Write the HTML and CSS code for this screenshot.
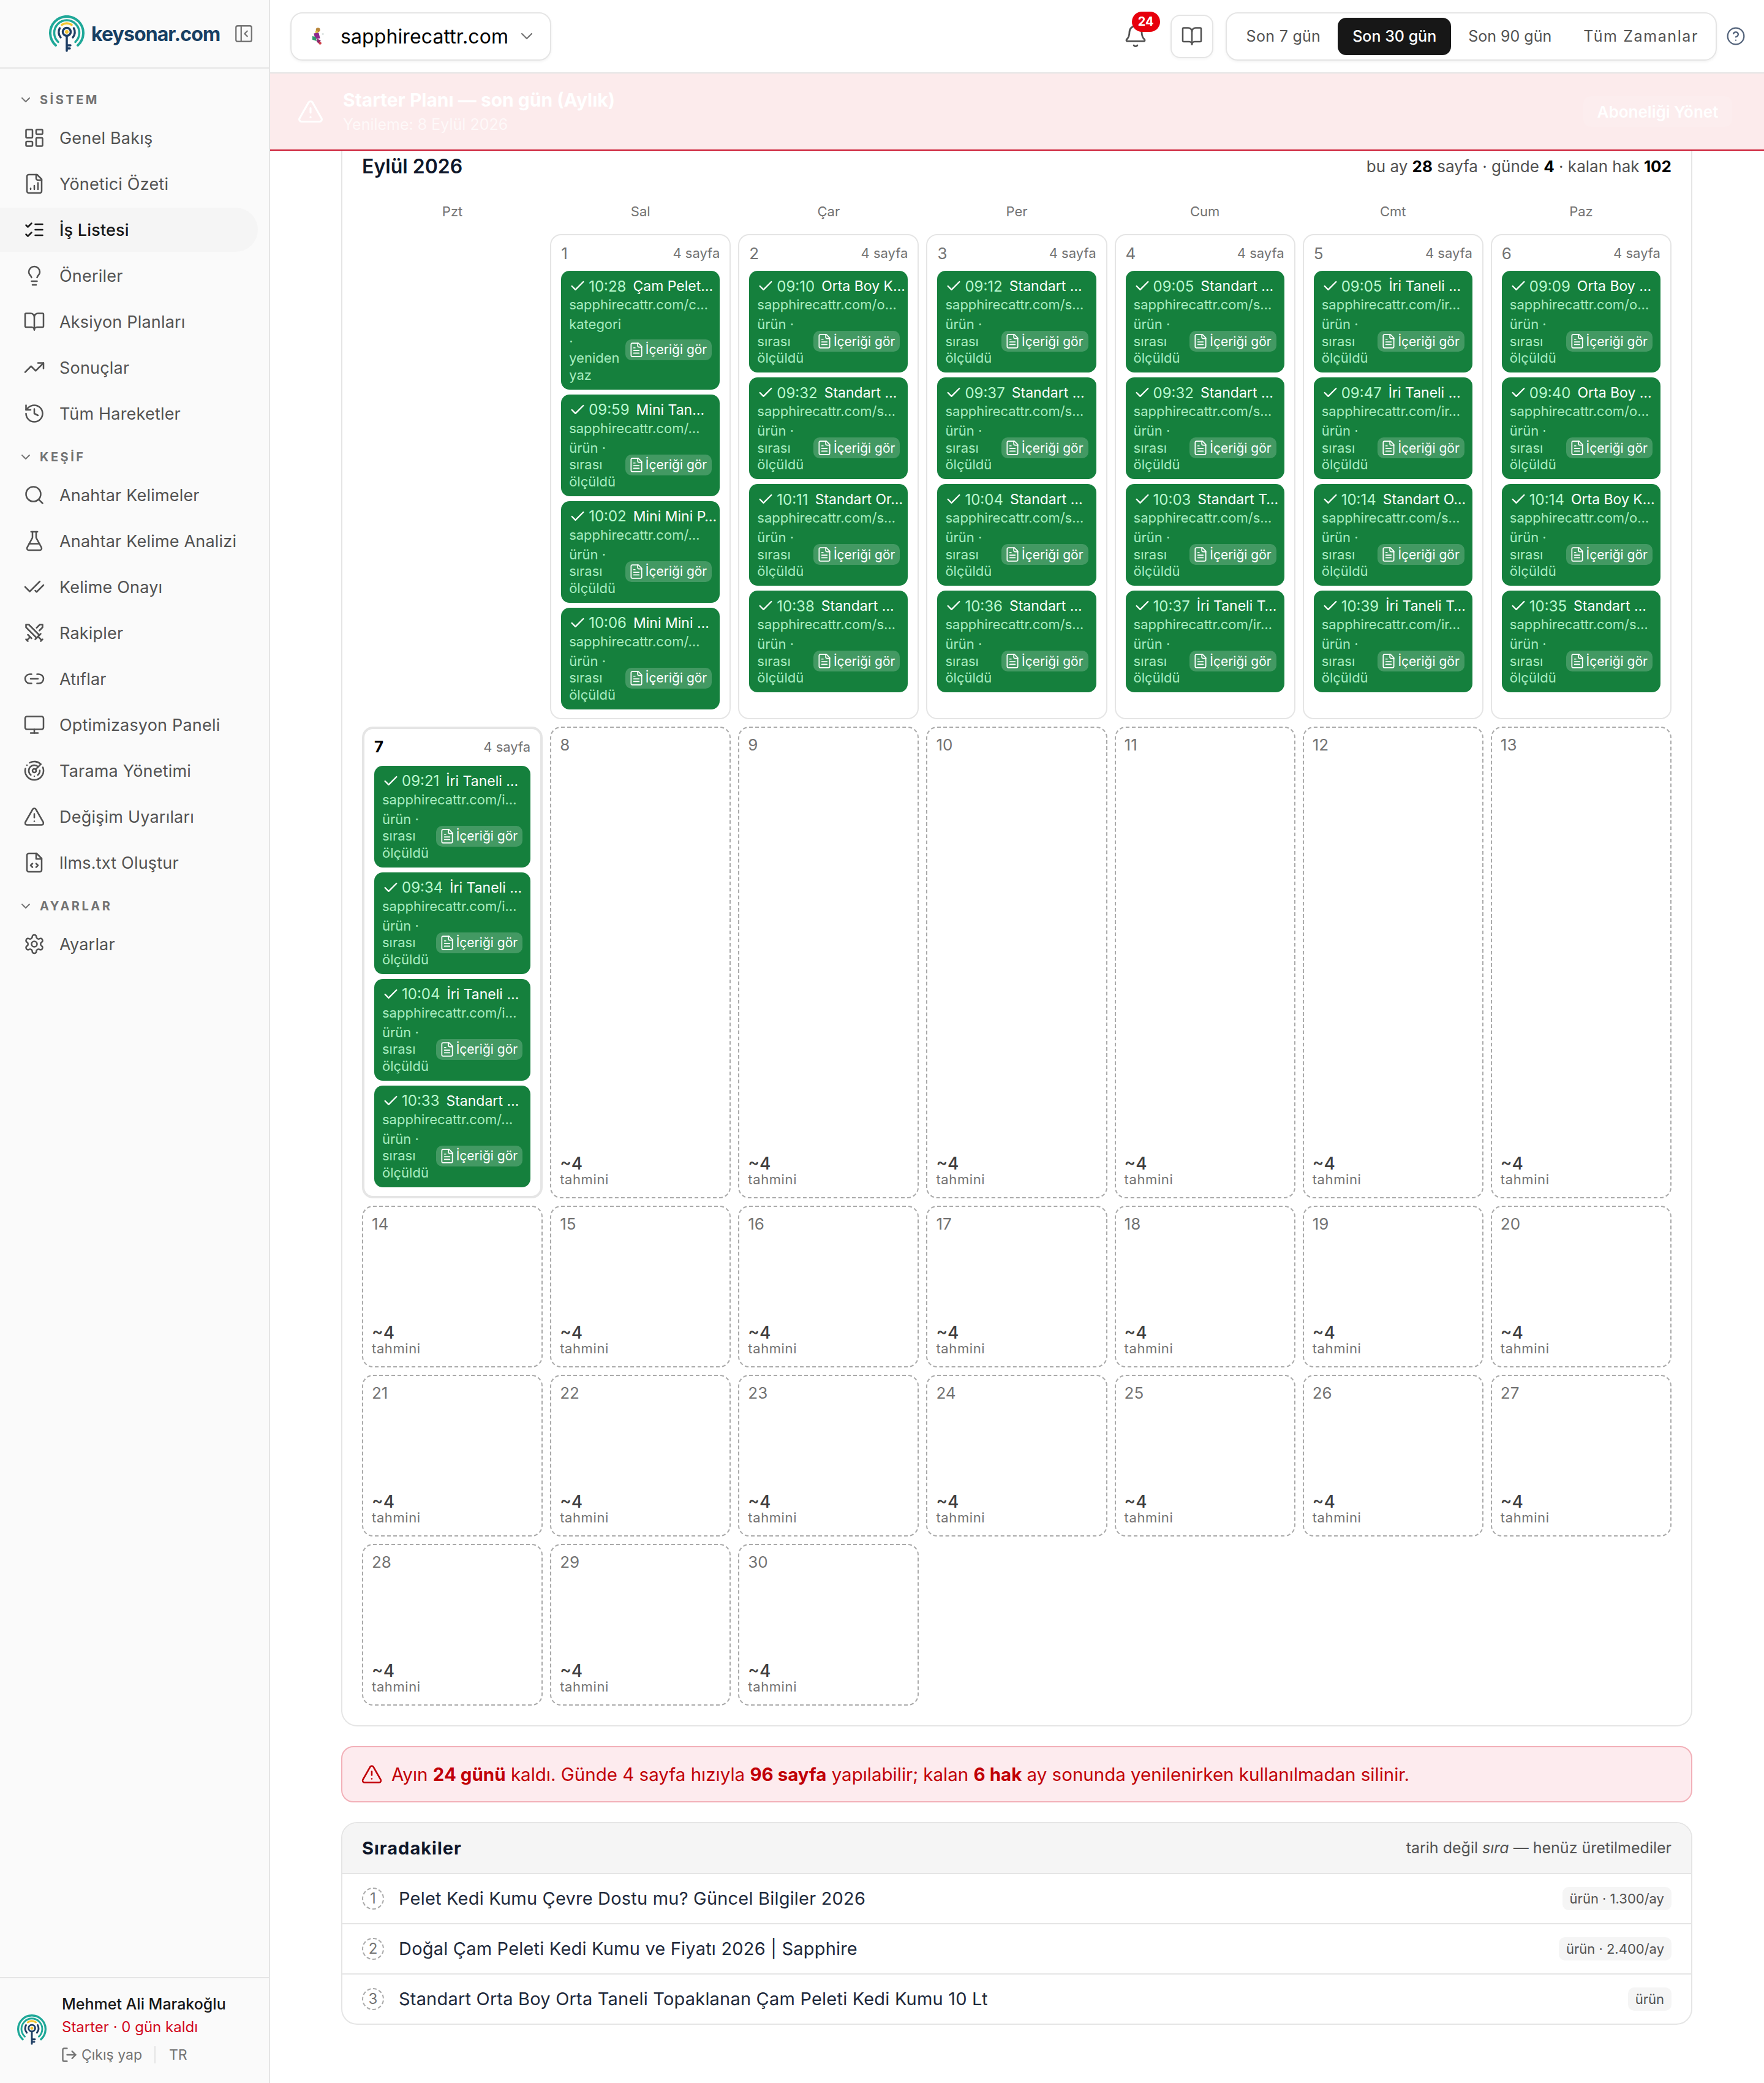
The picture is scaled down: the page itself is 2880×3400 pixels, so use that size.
FILE: index.html
```html
<!DOCTYPE html>
<html lang="tr">
<head>
    <meta charset="UTF-8">
    <title>keysonar.com - İş Listesi</title>
    <link rel="stylesheet" href="styles.css">
</head>
<body>

<!-- Icon sprite -->
<svg class="sprite" xmlns="http://www.w3.org/2000/svg">
    <symbol id="i-dash" viewBox="0 0 24 24"><rect x="3" y="3" width="7" height="9" rx="1"/><rect x="14" y="3" width="7" height="5" rx="1"/><rect x="14" y="12" width="7" height="9" rx="1"/><rect x="3" y="16" width="7" height="5" rx="1"/></symbol>
    <symbol id="i-report" viewBox="0 0 24 24"><path d="M15 2H6a2 2 0 0 0-2 2v16a2 2 0 0 0 2 2h12a2 2 0 0 0 2-2V7z"/><path d="M14 2v4a2 2 0 0 0 2 2h4"/><path d="M8 18v-1"/><path d="M12 18v-4"/><path d="M16 18v-7"/></symbol>
    <symbol id="i-list" viewBox="0 0 24 24"><path d="M3 17l2 2 4-4"/><path d="M3 7l2 2 4-4"/><path d="M13 6h8"/><path d="M13 12h8"/><path d="M13 18h8"/></symbol>
    <symbol id="i-bulb" viewBox="0 0 24 24"><path d="M15 14c.2-1 .7-1.7 1.5-2.5 1-.9 1.5-2.2 1.5-3.5A6 6 0 0 0 6 8c0 1 .2 2.2 1.5 3.5.7.7 1.3 1.5 1.5 2.5"/><path d="M9 18h6"/><path d="M10 22h4"/></symbol>
    <symbol id="i-book" viewBox="0 0 24 24"><path d="M12 7v14"/><path d="M3 18a1 1 0 0 1-1-1V4a1 1 0 0 1 1-1h5a4 4 0 0 1 4 4 4 4 0 0 1 4-4h5a1 1 0 0 1 1 1v13a1 1 0 0 1-1 1h-6a3 3 0 0 0-3 3 3 3 0 0 0-3-3z"/></symbol>
    <symbol id="i-trend" viewBox="0 0 24 24"><path d="M22 7l-8.500 8.500-5-5L2 17"/><path d="M16 7h6v6"/></symbol>
    <symbol id="i-history" viewBox="0 0 24 24"><path d="M3 12a9 9 0 1 0 9-9 9.750 9.750 0 0 0-6.740 2.740L3 8"/><path d="M3 3v5h5"/><path d="M12 7v5l4 2"/></symbol>
    <symbol id="i-search" viewBox="0 0 24 24"><circle cx="11" cy="11" r="8"/><path d="M21 21l-4.300-4.300"/></symbol>
    <symbol id="i-flask" viewBox="0 0 24 24"><path d="M14 2v6a2 2 0 0 0 .245.960l5.510 10.080A2 2 0 0 1 18 22H6a2 2 0 0 1-1.755-2.960l5.510-10.080A2 2 0 0 0 10 8V2"/><path d="M6.453 15h11.094"/><path d="M8.500 2h7"/></symbol>
    <symbol id="i-checks" viewBox="0 0 24 24"><path d="M18 6L7 17l-5-5"/><path d="M22 10l-7.500 7.500L13 16"/></symbol>
    <symbol id="i-swords" viewBox="0 0 24 24"><path d="M14.500 17.500L3 6V3h3l11.500 11.500"/><path d="M13 19l6-6"/><path d="M16 16l4 4"/><path d="M19 21l2-2"/><path d="M14.500 6.500L18 3h3v3l-3.500 3.500"/><path d="M5 14l4 4"/><path d="M7 17l-3 3"/><path d="M3 19l2 2"/></symbol>
    <symbol id="i-link" viewBox="0 0 24 24"><path d="M9 17H7A5 5 0 0 1 7 7h2"/><path d="M15 7h2a5 5 0 1 1 0 10h-2"/><path d="M8 12h8"/></symbol>
    <symbol id="i-monitor" viewBox="0 0 24 24"><rect x="2" y="3" width="20" height="14" rx="2"/><path d="M8 21h8"/><path d="M12 17v4"/></symbol>
    <symbol id="i-radar" viewBox="0 0 24 24"><path d="M19.070 4.930A10 10 0 0 0 6.990 3.340"/><path d="M4 6h.01"/><path d="M2.290 9.620A10 10 0 1 0 21.310 8.350"/><path d="M16.240 7.760A6 6 0 1 0 8.230 16.670"/><path d="M12 18h.01"/><path d="M17.990 11.660A6 6 0 0 1 15.770 16.670"/><circle cx="12" cy="12" r="2"/><path d="M13.410 10.590l5.660-5.660"/></symbol>
    <symbol id="i-alert" viewBox="0 0 24 24"><path d="M21.730 18l-8-14a2 2 0 0 0-3.480 0l-8 14A2 2 0 0 0 4 21h16a2 2 0 0 0 1.730-3"/><path d="M12 9v4"/><path d="M12 17h.01"/></symbol>
    <symbol id="i-filecode" viewBox="0 0 24 24"><path d="M14.500 2H6a2 2 0 0 0-2 2v16a2 2 0 0 0 2 2h12a2 2 0 0 0 2-2V7.500L14.500 2z"/><path d="M14 2v6h6"/><path d="M10 13l-2 2 2 2"/><path d="M14 17l2-2-2-2"/></symbol>
    <symbol id="i-gear" viewBox="0 0 24 24"><path d="M12.220 2h-.44a2 2 0 0 0-2 2v.18a2 2 0 0 1-1 1.730l-.43.25a2 2 0 0 1-2 0l-.15-.08a2 2 0 0 0-2.730.73l-.22.38a2 2 0 0 0 .73 2.730l.15.1a2 2 0 0 1 1 1.720v.51a2 2 0 0 1-1 1.740l-.15.09a2 2 0 0 0-.73 2.730l.22.38a2 2 0 0 0 2.730.73l.15-.08a2 2 0 0 1 2 0l.43.25a2 2 0 0 1 1 1.730V20a2 2 0 0 0 2 2h.44a2 2 0 0 0 2-2v-.18a2 2 0 0 1 1-1.730l.43-.25a2 2 0 0 1 2 0l.15.08a2 2 0 0 0 2.730-.73l.22-.39a2 2 0 0 0-.73-2.730l-.15-.08a2 2 0 0 1-1-1.740v-.5a2 2 0 0 1 1-1.740l.15-.09a2 2 0 0 0 .73-2.730l-.22-.38a2 2 0 0 0-2.730-.73l-.15.08a2 2 0 0 1-2 0l-.43-.25a2 2 0 0 1-1-1.730V4a2 2 0 0 0-2-2z"/><circle cx="12" cy="12" r="3"/></symbol>
    <symbol id="i-chev" viewBox="0 0 24 24"><path d="M6 9l6 6 6-6"/></symbol>
    <symbol id="i-panel" viewBox="0 0 24 24"><rect x="3" y="3" width="18" height="18" rx="2"/><path d="M9 3v18"/><path d="M16 15l-3-3 3-3"/></symbol>
    <symbol id="i-bell" viewBox="0 0 24 24"><path d="M10.268 21a2 2 0 0 0 3.464 0"/><path d="M3.262 15.326A1 1 0 0 0 4 17h16a1 1 0 0 0 .74-1.673C19.410 13.956 18 12.499 18 8A6 6 0 0 0 6 8c0 4.499-1.411 5.956-2.738 7.326"/></symbol>
    <symbol id="i-help" viewBox="0 0 24 24"><circle cx="12" cy="12" r="10"/><path d="M9.090 9a3 3 0 0 1 5.830 1c0 2-3 3-3 3"/><path d="M12 17h.01"/></symbol>
    <symbol id="i-check" viewBox="0 0 24 24"><path d="M20 6L9 17l-5-5"/></symbol>
    <symbol id="i-file" viewBox="0 0 24 24"><path d="M15 2H6a2 2 0 0 0-2 2v16a2 2 0 0 0 2 2h12a2 2 0 0 0 2-2V7z"/><path d="M14 2v4a2 2 0 0 0 2 2h4"/><path d="M10 9H8"/><path d="M16 13H8"/><path d="M16 17H8"/></symbol>
    <symbol id="i-logout" viewBox="0 0 24 24"><path d="M9 21H5a2 2 0 0 1-2-2V5a2 2 0 0 1 2-2h4"/><path d="M16 17l5-5-5-5"/><path d="M21 12H9"/></symbol>
    <symbol id="i-logo" viewBox="0 0 58 60">
        <g fill="none" stroke-linecap="round">
            <path d="M11 49A27 27 0 1 1 47 49" stroke="#1fa898" stroke-width="4"/>
            <path d="M15 43.500A20.500 20.500 0 1 1 43 43.500" stroke="#1fa898" stroke-width="3.500"/>
            <path d="M19 36A13.500 13.500 0 0 1 17.500 21" stroke="#1d3d63" stroke-width="3.500"/>
            <path d="M39 36A13.500 13.500 0 0 0 40.500 21" stroke="#1d3d63" stroke-width="3.500"/>
            <path d="M21 15.500A14.500 14.500 0 0 1 37 15.500" stroke="#f4c430" stroke-width="3.500"/>
            <circle cx="29" cy="27" r="6.500" stroke="#1d3d63" stroke-width="3.500"/>
            <path d="M29 34v24M29 49h6M29 54h5" stroke="#1d3d63" stroke-width="3.500"/>
        </g>
        <circle cx="29" cy="27" r="3" fill="#f4c430"/>
    </symbol>
</svg>

<div class="app">

    <!-- Sidebar -->
    <aside class="sidebar">
        <div class="brand">
            <svg class="brand-logo"><use href="#i-logo"/></svg>
            <span class="brand-name">keysonar.com</span>
            <svg class="ic brand-toggle"><use href="#i-panel"/></svg>
        </div>

        <nav class="nav">
            <div class="nav-label"><svg class="ic"><use href="#i-chev"/></svg><span>SİSTEM</span></div>
            <a class="nav-item"><svg class="ic"><use href="#i-dash"/></svg>Genel Bakış</a>
            <a class="nav-item"><svg class="ic"><use href="#i-report"/></svg>Yönetici Özeti</a>
            <a class="nav-item active"><svg class="ic"><use href="#i-list"/></svg>İş Listesi</a>
            <a class="nav-item"><svg class="ic"><use href="#i-bulb"/></svg>Öneriler</a>
            <a class="nav-item"><svg class="ic"><use href="#i-book"/></svg>Aksiyon Planları</a>
            <a class="nav-item"><svg class="ic"><use href="#i-trend"/></svg>Sonuçlar</a>
            <a class="nav-item"><svg class="ic"><use href="#i-history"/></svg>Tüm Hareketler</a>

            <div class="nav-label"><svg class="ic"><use href="#i-chev"/></svg><span>KEŞİF</span></div>
            <a class="nav-item"><svg class="ic"><use href="#i-search"/></svg>Anahtar Kelimeler</a>
            <a class="nav-item"><svg class="ic"><use href="#i-flask"/></svg>Anahtar Kelime Analizi</a>
            <a class="nav-item"><svg class="ic"><use href="#i-checks"/></svg>Kelime Onayı</a>
            <a class="nav-item"><svg class="ic"><use href="#i-swords"/></svg>Rakipler</a>
            <a class="nav-item"><svg class="ic"><use href="#i-link"/></svg>Atıflar</a>
            <a class="nav-item"><svg class="ic"><use href="#i-monitor"/></svg>Optimizasyon Paneli</a>
            <a class="nav-item"><svg class="ic"><use href="#i-radar"/></svg>Tarama Yönetimi</a>
            <a class="nav-item"><svg class="ic"><use href="#i-alert"/></svg>Değişim Uyarıları</a>
            <a class="nav-item"><svg class="ic"><use href="#i-filecode"/></svg>llms.txt Oluştur</a>

            <div class="nav-label"><svg class="ic"><use href="#i-chev"/></svg><span>AYARLAR</span></div>
            <a class="nav-item"><svg class="ic"><use href="#i-gear"/></svg>Ayarlar</a>
        </nav>

        <div class="user">
            <svg class="user-logo"><use href="#i-logo"/></svg>
            <div class="user-info">
                <div class="user-name">Mehmet Ali Marakoğlu</div>
                <div class="user-plan">Starter · 0 gün kaldı</div>
                <div class="user-actions">
                    <svg class="ic"><use href="#i-logout"/></svg>
                    <span>Çıkış yap</span>
                    <span class="user-sep"></span>
                    <span>TR</span>
                </div>
            </div>
        </div>
    </aside>

    <div class="main">

        <!-- Top bar -->
        <header class="topbar">
            <button class="site-select">
                <svg class="favicon" viewBox="0 0 28 28">
                    <circle cx="15" cy="5" r="3" fill="#b8863b"/>
                    <circle cx="13" cy="8" r="2" fill="#d9c24a"/>
                    <path d="M9 10l7-1 2 8-7 1z" fill="#8e2a8e"/>
                    <path d="M7 14l5 1 1 6-6-2z" fill="#2f9a6d"/>
                    <path d="M14 18l5 2-2 5-4-3z" fill="#8e2a6d"/>
                    <circle cx="18" cy="24" r="2" fill="#d0434b"/>
                    <circle cx="22" cy="11" r="1.500" fill="#dfe5e3"/>
                </svg>
                <span>sapphirecattr.com</span>
                <svg class="ic"><use href="#i-chev"/></svg>
            </button>

            <div class="topbar-right">
                <div class="bell">
                    <svg class="ic"><use href="#i-bell"/></svg>
                    <span class="bell-badge">24</span>
                </div>
                <button class="book-btn"><svg class="ic"><use href="#i-book"/></svg></button>
                <div class="range">
                    <button>Son 7 gün</button>
                    <button class="on">Son 30 gün</button>
                    <button>Son 90 gün</button>
                    <button>Tüm Zamanlar</button>
                </div>
                <svg class="ic help"><use href="#i-help"/></svg>
            </div>
        </header>

        <!-- Plan banner -->
        <div class="banner">
            <svg class="ic"><use href="#i-alert"/></svg>
            <div class="banner-text">
                <div class="banner-title">Starter Planı — son gün (Aylık)</div>
                <div class="banner-sub">Yenileme: 8 Eylül 2026</div>
            </div>
            <button class="banner-btn">Aboneliği Yönet</button>
        </div>

        <div class="content">

            <!-- Month calendar -->
            <section class="calendar">
                <div class="cal-head">
                    <h2>Eylül 2026</h2>
                    <p>bu ay <b>28</b> sayfa · günde <b>4</b> · kalan hak <b>102</b></p>
                </div>

                <div class="weekdays">
                    <span>Pzt</span><span>Sal</span><span>Çar</span><span>Per</span><span>Cum</span><span>Cmt</span><span>Paz</span>
                </div>

                <div class="cal-grid">
                    <div></div>

                    <div class="day">
                        <div class="day-head"><span>1</span><small>4 sayfa</small></div>
                        <div class="job"><div class="job-title"><svg class="ic"><use href="#i-check"/></svg><time>10:28</time><span>Çam Pelet…</span></div><div class="job-url">sapphirecattr.com/c…</div><div class="job-meta"><span>kategori · yeniden yaz</span><a class="job-btn"><svg class="ic"><use href="#i-file"/></svg>İçeriği gör</a></div></div>
                        <div class="job"><div class="job-title"><svg class="ic"><use href="#i-check"/></svg><time>09:59</time><span>Mini Tan…</span></div><div class="job-url">sapphirecattr.com/…</div><div class="job-meta"><span>ürün · sırası ölçüldü</span><a class="job-btn"><svg class="ic"><use href="#i-file"/></svg>İçeriği gör</a></div></div>
                        <div class="job"><div class="job-title"><svg class="ic"><use href="#i-check"/></svg><time>10:02</time><span>Mini Mini P…</span></div><div class="job-url">sapphirecattr.com/…</div><div class="job-meta"><span>ürün · sırası ölçüldü</span><a class="job-btn"><svg class="ic"><use href="#i-file"/></svg>İçeriği gör</a></div></div>
                        <div class="job"><div class="job-title"><svg class="ic"><use href="#i-check"/></svg><time>10:06</time><span>Mini Mini …</span></div><div class="job-url">sapphirecattr.com/…</div><div class="job-meta"><span>ürün · sırası ölçüldü</span><a class="job-btn"><svg class="ic"><use href="#i-file"/></svg>İçeriği gör</a></div></div>
                    </div>

                    <div class="day">
                        <div class="day-head"><span>2</span><small>4 sayfa</small></div>
                        <div class="job"><div class="job-title"><svg class="ic"><use href="#i-check"/></svg><time>09:10</time><span>Orta Boy K…</span></div><div class="job-url">sapphirecattr.com/o…</div><div class="job-meta"><span>ürün · sırası ölçüldü</span><a class="job-btn"><svg class="ic"><use href="#i-file"/></svg>İçeriği gör</a></div></div>
                        <div class="job"><div class="job-title"><svg class="ic"><use href="#i-check"/></svg><time>09:32</time><span>Standart …</span></div><div class="job-url">sapphirecattr.com/s…</div><div class="job-meta"><span>ürün · sırası ölçüldü</span><a class="job-btn"><svg class="ic"><use href="#i-file"/></svg>İçeriği gör</a></div></div>
                        <div class="job"><div class="job-title"><svg class="ic"><use href="#i-check"/></svg><time>10:11</time><span>Standart Or…</span></div><div class="job-url">sapphirecattr.com/s…</div><div class="job-meta"><span>ürün · sırası ölçüldü</span><a class="job-btn"><svg class="ic"><use href="#i-file"/></svg>İçeriği gör</a></div></div>
                        <div class="job"><div class="job-title"><svg class="ic"><use href="#i-check"/></svg><time>10:38</time><span>Standart …</span></div><div class="job-url">sapphirecattr.com/s…</div><div class="job-meta"><span>ürün · sırası ölçüldü</span><a class="job-btn"><svg class="ic"><use href="#i-file"/></svg>İçeriği gör</a></div></div>
                    </div>

                    <div class="day">
                        <div class="day-head"><span>3</span><small>4 sayfa</small></div>
                        <div class="job"><div class="job-title"><svg class="ic"><use href="#i-check"/></svg><time>09:12</time><span>Standart …</span></div><div class="job-url">sapphirecattr.com/s…</div><div class="job-meta"><span>ürün · sırası ölçüldü</span><a class="job-btn"><svg class="ic"><use href="#i-file"/></svg>İçeriği gör</a></div></div>
                        <div class="job"><div class="job-title"><svg class="ic"><use href="#i-check"/></svg><time>09:37</time><span>Standart …</span></div><div class="job-url">sapphirecattr.com/s…</div><div class="job-meta"><span>ürün · sırası ölçüldü</span><a class="job-btn"><svg class="ic"><use href="#i-file"/></svg>İçeriği gör</a></div></div>
                        <div class="job"><div class="job-title"><svg class="ic"><use href="#i-check"/></svg><time>10:04</time><span>Standart …</span></div><div class="job-url">sapphirecattr.com/s…</div><div class="job-meta"><span>ürün · sırası ölçüldü</span><a class="job-btn"><svg class="ic"><use href="#i-file"/></svg>İçeriği gör</a></div></div>
                        <div class="job"><div class="job-title"><svg class="ic"><use href="#i-check"/></svg><time>10:36</time><span>Standart …</span></div><div class="job-url">sapphirecattr.com/s…</div><div class="job-meta"><span>ürün · sırası ölçüldü</span><a class="job-btn"><svg class="ic"><use href="#i-file"/></svg>İçeriği gör</a></div></div>
                    </div>

                    <div class="day">
                        <div class="day-head"><span>4</span><small>4 sayfa</small></div>
                        <div class="job"><div class="job-title"><svg class="ic"><use href="#i-check"/></svg><time>09:05</time><span>Standart …</span></div><div class="job-url">sapphirecattr.com/s…</div><div class="job-meta"><span>ürün · sırası ölçüldü</span><a class="job-btn"><svg class="ic"><use href="#i-file"/></svg>İçeriği gör</a></div></div>
                        <div class="job"><div class="job-title"><svg class="ic"><use href="#i-check"/></svg><time>09:32</time><span>Standart …</span></div><div class="job-url">sapphirecattr.com/s…</div><div class="job-meta"><span>ürün · sırası ölçüldü</span><a class="job-btn"><svg class="ic"><use href="#i-file"/></svg>İçeriği gör</a></div></div>
                        <div class="job"><div class="job-title"><svg class="ic"><use href="#i-check"/></svg><time>10:03</time><span>Standart T…</span></div><div class="job-url">sapphirecattr.com/s…</div><div class="job-meta"><span>ürün · sırası ölçüldü</span><a class="job-btn"><svg class="ic"><use href="#i-file"/></svg>İçeriği gör</a></div></div>
                        <div class="job"><div class="job-title"><svg class="ic"><use href="#i-check"/></svg><time>10:37</time><span>İri Taneli T…</span></div><div class="job-url">sapphirecattr.com/ir…</div><div class="job-meta"><span>ürün · sırası ölçüldü</span><a class="job-btn"><svg class="ic"><use href="#i-file"/></svg>İçeriği gör</a></div></div>
                    </div>

                    <div class="day">
                        <div class="day-head"><span>5</span><small>4 sayfa</small></div>
                        <div class="job"><div class="job-title"><svg class="ic"><use href="#i-check"/></svg><time>09:05</time><span>İri Taneli …</span></div><div class="job-url">sapphirecattr.com/ir…</div><div class="job-meta"><span>ürün · sırası ölçüldü</span><a class="job-btn"><svg class="ic"><use href="#i-file"/></svg>İçeriği gör</a></div></div>
                        <div class="job"><div class="job-title"><svg class="ic"><use href="#i-check"/></svg><time>09:47</time><span>İri Taneli …</span></div><div class="job-url">sapphirecattr.com/ir…</div><div class="job-meta"><span>ürün · sırası ölçüldü</span><a class="job-btn"><svg class="ic"><use href="#i-file"/></svg>İçeriği gör</a></div></div>
                        <div class="job"><div class="job-title"><svg class="ic"><use href="#i-check"/></svg><time>10:14</time><span>Standart O…</span></div><div class="job-url">sapphirecattr.com/s…</div><div class="job-meta"><span>ürün · sırası ölçüldü</span><a class="job-btn"><svg class="ic"><use href="#i-file"/></svg>İçeriği gör</a></div></div>
                        <div class="job"><div class="job-title"><svg class="ic"><use href="#i-check"/></svg><time>10:39</time><span>İri Taneli T…</span></div><div class="job-url">sapphirecattr.com/ir…</div><div class="job-meta"><span>ürün · sırası ölçüldü</span><a class="job-btn"><svg class="ic"><use href="#i-file"/></svg>İçeriği gör</a></div></div>
                    </div>

                    <div class="day">
                        <div class="day-head"><span>6</span><small>4 sayfa</small></div>
                        <div class="job"><div class="job-title"><svg class="ic"><use href="#i-check"/></svg><time>09:09</time><span>Orta Boy …</span></div><div class="job-url">sapphirecattr.com/o…</div><div class="job-meta"><span>ürün · sırası ölçüldü</span><a class="job-btn"><svg class="ic"><use href="#i-file"/></svg>İçeriği gör</a></div></div>
                        <div class="job"><div class="job-title"><svg class="ic"><use href="#i-check"/></svg><time>09:40</time><span>Orta Boy …</span></div><div class="job-url">sapphirecattr.com/o…</div><div class="job-meta"><span>ürün · sırası ölçüldü</span><a class="job-btn"><svg class="ic"><use href="#i-file"/></svg>İçeriği gör</a></div></div>
                        <div class="job"><div class="job-title"><svg class="ic"><use href="#i-check"/></svg><time>10:14</time><span>Orta Boy K…</span></div><div class="job-url">sapphirecattr.com/o…</div><div class="job-meta"><span>ürün · sırası ölçüldü</span><a class="job-btn"><svg class="ic"><use href="#i-file"/></svg>İçeriği gör</a></div></div>
                        <div class="job"><div class="job-title"><svg class="ic"><use href="#i-check"/></svg><time>10:35</time><span>Standart …</span></div><div class="job-url">sapphirecattr.com/s…</div><div class="job-meta"><span>ürün · sırası ölçüldü</span><a class="job-btn"><svg class="ic"><use href="#i-file"/></svg>İçeriği gör</a></div></div>
                    </div>

                    <div class="day today">
                        <div class="day-head"><span>7</span><small>4 sayfa</small></div>
                        <div class="job"><div class="job-title"><svg class="ic"><use href="#i-check"/></svg><time>09:21</time><span>İri Taneli …</span></div><div class="job-url">sapphirecattr.com/i…</div><div class="job-meta"><span>ürün · sırası ölçüldü</span><a class="job-btn"><svg class="ic"><use href="#i-file"/></svg>İçeriği gör</a></div></div>
                        <div class="job"><div class="job-title"><svg class="ic"><use href="#i-check"/></svg><time>09:34</time><span>İri Taneli …</span></div><div class="job-url">sapphirecattr.com/i…</div><div class="job-meta"><span>ürün · sırası ölçüldü</span><a class="job-btn"><svg class="ic"><use href="#i-file"/></svg>İçeriği gör</a></div></div>
                        <div class="job"><div class="job-title"><svg class="ic"><use href="#i-check"/></svg><time>10:04</time><span>İri Taneli …</span></div><div class="job-url">sapphirecattr.com/i…</div><div class="job-meta"><span>ürün · sırası ölçüldü</span><a class="job-btn"><svg class="ic"><use href="#i-file"/></svg>İçeriği gör</a></div></div>
                        <div class="job"><div class="job-title"><svg class="ic"><use href="#i-check"/></svg><time>10:33</time><span>Standart …</span></div><div class="job-url">sapphirecattr.com/…</div><div class="job-meta"><span>ürün · sırası ölçüldü</span><a class="job-btn"><svg class="ic"><use href="#i-file"/></svg>İçeriği gör</a></div></div>
                    </div>

                    <div class="slot"><span>8</span><div><b>~4</b><small>tahmini</small></div></div>
                    <div class="slot"><span>9</span><div><b>~4</b><small>tahmini</small></div></div>
                    <div class="slot"><span>10</span><div><b>~4</b><small>tahmini</small></div></div>
                    <div class="slot"><span>11</span><div><b>~4</b><small>tahmini</small></div></div>
                    <div class="slot"><span>12</span><div><b>~4</b><small>tahmini</small></div></div>
                    <div class="slot"><span>13</span><div><b>~4</b><small>tahmini</small></div></div>

                    <div class="slot"><span>14</span><div><b>~4</b><small>tahmini</small></div></div>
                    <div class="slot"><span>15</span><div><b>~4</b><small>tahmini</small></div></div>
                    <div class="slot"><span>16</span><div><b>~4</b><small>tahmini</small></div></div>
                    <div class="slot"><span>17</span><div><b>~4</b><small>tahmini</small></div></div>
                    <div class="slot"><span>18</span><div><b>~4</b><small>tahmini</small></div></div>
                    <div class="slot"><span>19</span><div><b>~4</b><small>tahmini</small></div></div>
                    <div class="slot"><span>20</span><div><b>~4</b><small>tahmini</small></div></div>

                    <div class="slot"><span>21</span><div><b>~4</b><small>tahmini</small></div></div>
                    <div class="slot"><span>22</span><div><b>~4</b><small>tahmini</small></div></div>
                    <div class="slot"><span>23</span><div><b>~4</b><small>tahmini</small></div></div>
                    <div class="slot"><span>24</span><div><b>~4</b><small>tahmini</small></div></div>
                    <div class="slot"><span>25</span><div><b>~4</b><small>tahmini</small></div></div>
                    <div class="slot"><span>26</span><div><b>~4</b><small>tahmini</small></div></div>
                    <div class="slot"><span>27</span><div><b>~4</b><small>tahmini</small></div></div>

                    <div class="slot"><span>28</span><div><b>~4</b><small>tahmini</small></div></div>
                    <div class="slot"><span>29</span><div><b>~4</b><small>tahmini</small></div></div>
                    <div class="slot"><span>30</span><div><b>~4</b><small>tahmini</small></div></div>
                </div>
            </section>

            <!-- Remaining quota notice -->
            <div class="notice">
                <svg class="ic"><use href="#i-alert"/></svg>
                <p>Ayın <b>24 günü</b> kaldı. Günde 4 sayfa hızıyla <b>96 sayfa</b> yapılabilir; kalan <b>6 hak</b> ay sonunda yenilenirken kullanılmadan silinir.</p>
            </div>

            <!-- Up next -->
            <section class="queue">
                <div class="queue-head">
                    <h3>Sıradakiler</h3>
                    <p>tarih değil <i>sıra</i> — henüz üretilmediler</p>
                </div>
                <div class="queue-row"><span class="queue-num">1</span><span class="queue-name">Pelet Kedi Kumu Çevre Dostu mu? Güncel Bilgiler 2026</span><span class="queue-tag">ürün · 1.300/ay</span></div>
                <div class="queue-row"><span class="queue-num">2</span><span class="queue-name">Doğal Çam Peleti Kedi Kumu ve Fiyatı 2026 | Sapphire</span><span class="queue-tag">ürün · 2.400/ay</span></div>
                <div class="queue-row"><span class="queue-num">3</span><span class="queue-name">Standart Orta Boy Orta Taneli Topaklanan Çam Peleti Kedi Kumu 10 Lt</span><span class="queue-tag">ürün</span></div>
            </section>

        </div>
    </div>
</div>

</body>
</html>
```

FILE: styles.css
```css
* {
    box-sizing: border-box;
}

body {
    margin: 0;
    font-family: Inter, "Noto Sans", sans-serif;
    font-size: 26px;
    color: #171717;
    background-color: white;
}

h2, h3, p {
    margin: 0;
}

button {
    font: inherit;
    background: none;
    border: none;
    padding: 0;
}

.sprite {
    display: none;
}

.ic {
    flex: none;
    width: 28px;
    height: 28px;
    fill: none;
    stroke: currentColor;
    stroke-width: 2;
    stroke-linecap: round;
    stroke-linejoin: round;
}

.app {
    display: flex;
    height: 3400px;
    overflow: hidden;
}

/* Sidebar */
.sidebar {
    flex: none;
    width: 441px;
    display: flex;
    flex-direction: column;
    background-color: #fafafa;
    border-right: 2px solid #e5e5e5;
}

.brand {
    display: flex;
    align-items: center;
    height: 112px;
    padding-left: 80px;
    border-bottom: 2px solid #e5e5e5;
}

.brand-logo {
    flex: none;
    width: 58px;
    height: 60px;
}

.brand-name {
    width: 209px;
    margin-left: 11px;
    font-size: 32px;
    font-weight: 700;
    letter-spacing: -0.9px;
    white-space: nowrap;
    color: #173f63;
}

.brand-toggle {
    width: 34px;
    height: 34px;
    margin-left: 23px;
    stroke-width: 1.6;
    color: #737373;
}

.nav {
    flex: 1;
    padding: 25px 18px 0 0;
}

.nav-label {
    display: flex;
    align-items: center;
    gap: 11px;
    height: 52px;
    margin-top: 9px;
    padding-left: 30px;
    font-size: 20px;
    font-weight: 700;
    letter-spacing: 3.5px;
    color: #737373;
}

.nav-label:first-child {
    margin-top: 0;
}

.nav-label .ic {
    width: 24px;
    height: 24px;
}

.nav-item {
    display: flex;
    align-items: center;
    gap: 23px;
    height: 72px;
    margin-bottom: 3px;
    padding-left: 38px;
    font-size: 27px;
    letter-spacing: 0.2px;
    color: #525252;
    border-radius: 0 36px 36px 0;
}

.nav-item .ic {
    width: 36px;
    height: 36px;
    stroke-width: 1.7;
}

.nav-item.active {
    color: #171717;
    font-weight: 500;
    background-color: #f5f5f5;
}

.user {
    display: flex;
    align-items: center;
    gap: 25px;
    height: 173px;
    padding: 0 0 4px 28px;
    border-top: 2px solid #e5e5e5;
}

.user-logo {
    flex: none;
    width: 48px;
    height: 50px;
}

.user-name {
    font-size: 25px;
    font-weight: 500;
    line-height: 38px;
}

.user-plan {
    font-size: 24px;
    line-height: 38px;
    color: #d1091e;
}

.user-actions {
    display: flex;
    align-items: center;
    gap: 6px;
    height: 40px;
    margin: 6px 0 0 -2px;
    font-size: 23px;
    color: #737373;
}

.user-actions .ic {
    width: 28px;
    height: 28px;
}

.user-sep {
    width: 2px;
    height: 28px;
    margin: 0 16px 0 14px;
    background-color: #e5e5e5;
}

/* Top bar */
.main {
    flex: 1;
    min-width: 0;
}

.topbar {
    display: flex;
    justify-content: space-between;
    align-items: center;
    height: 120px;
    padding: 0 30px 0 33px;
    border-bottom: 2px solid #e5e5e5;
}

.site-select {
    display: flex;
    align-items: center;
    width: 426px;
    height: 79px;
    padding-left: 26px;
    font-size: 32px;
    letter-spacing: 0.1px;
    border: 2px solid #e5e5e5;
    border-radius: 20px;
    box-shadow: 0 2px 4px rgba(0, 0, 0, 0.05);
    color: black;
}

.site-select .favicon {
    width: 32px;
    height: 32px;
    margin-right: 22px;
}

.site-select .ic {
    width: 32px;
    height: 32px;
    margin-left: 14px;
    stroke-width: 1.6;
    color: #737373;
}

.topbar-right {
    display: flex;
    align-items: center;
    gap: 20px;
}

.bell {
    position: relative;
    width: 40px;
    height: 40px;
    margin-right: 17px;
    color: #525252;
}

.bell .ic {
    width: 40px;
    height: 40px;
    stroke-width: 1.7;
}

.bell-badge {
    position: absolute;
    top: -20px;
    left: 14px;
    width: 46px;
    height: 33px;
    font-size: 20px;
    font-weight: 700;
    line-height: 33px;
    text-align: center;
    color: white;
    background-color: #e7000b;
    border-radius: 17px;
}

.book-btn {
    display: flex;
    justify-content: center;
    align-items: center;
    width: 70px;
    height: 71px;
    color: #525252;
    border: 2px solid #e5e5e5;
    border-radius: 16px;
    box-shadow: 0 2px 4px rgba(0, 0, 0, 0.04);
}

.book-btn .ic {
    width: 36px;
    height: 36px;
    stroke-width: 1.7;
}

.range {
    display: flex;
    gap: 4px;
    height: 79px;
    padding: 7px 8px;
    border: 2px solid #e5e5e5;
    border-radius: 20px;
    box-shadow: 0 2px 4px rgba(0, 0, 0, 0.05);
}

.range button {
    padding: 0 24px;
    font-size: 25px;
    color: #525252;
    border-radius: 14px;
}

.range button:first-child {
    letter-spacing: 0.3px;
}

.range button:last-child {
    padding-right: 20px;
    letter-spacing: 1.6px;
}

.range button.on {
    color: white;
    font-weight: 500;
    background-color: #171717;
}

.help {
    width: 32px;
    height: 32px;
    margin-left: -5px;
    stroke-width: 1.7;
    color: #52627a;
}

/* Plan banner */
.banner {
    display: flex;
    align-items: center;
    height: 126px;
    padding: 0 52px 0 44px;
    color: white;
    background-color: #fcebec;
    border-bottom: 2px solid #c9102a;
}

.banner .ic {
    width: 44px;
    height: 44px;
    stroke-width: 1.7;
}

.banner-text {
    flex: 1;
    margin-left: 31px;
}

.banner-title {
    font-size: 30px;
    font-weight: 700;
    line-height: 40px;
}

.banner-sub {
    margin-top: 2px;
    font-size: 25px;
    line-height: 36px;
    opacity: 0.7;
}

.banner-btn {
    width: 243px;
    height: 50px;
    font-size: 26px;
    font-weight: 600;
    color: white;
    background-color: rgba(255, 255, 255, 0.1);
    border-radius: 12px;
}

/* Page content */
.content {
    display: flex;
    flex-direction: column;
    gap: 32px;
    padding: 0 117px 0 116px;
}

.calendar {
    padding: 0 32px 32px;
    border: 2px solid #e5e5e5;
    border-top: none;
    border-radius: 0 0 26px 26px;
}

.cal-head {
    display: flex;
    justify-content: space-between;
    align-items: center;
    height: 50px;
    margin-bottom: 32px;
}

.cal-head h2 {
    font-size: 32px;
    font-weight: 600;
    color: #0f172a;
}

.cal-head p {
    color: #525252;
}

.cal-head b {
    font-weight: 700;
    color: black;
}

.weekdays {
    display: grid;
    grid-template-columns: repeat(7, 1fr);
    gap: 12px;
    margin-bottom: 20px;
    font-size: 22px;
    line-height: 34px;
    text-align: center;
    color: #737373;
}

.cal-grid {
    display: grid;
    grid-template-columns: repeat(7, minmax(0, 1fr));
    gap: 12px;
}

/* Days that have pages */
.day {
    padding: 14px 16px;
    border: 2px solid #e5e5e5;
    border-radius: 18px;
}

.day-head {
    display: flex;
    justify-content: space-between;
    align-items: center;
    height: 30px;
    margin-bottom: 14px;
    font-size: 26px;
    color: #737373;
}

.day-head small {
    font-size: 22px;
}

.today {
    border-width: 4px;
    padding-bottom: 14px;
}

.today .day-head {
    margin-bottom: 16px;
}

.today .day-head span {
    font-weight: 700;
    color: black;
}

.job {
    margin-top: 8px;
    padding: 10px 13px 9.500px;
    color: #b9f8cf;
    background-color: #15803d;
    border-radius: 14px;
}

.day-head + .job {
    margin-top: 0;
}

.job-title {
    display: flex;
    align-items: center;
    gap: 4px;
    height: 30px;
    font-size: 24px;
    white-space: nowrap;
}

.job-title .ic {
    color: white;
}

.job-title time {
    margin-right: 7px;
}

.job-title span {
    font-size: 23px;
    color: white;
}

.job-url {
    height: 30px;
    font-size: 22px;
    line-height: 30px;
    white-space: nowrap;
    opacity: 0.9;
}

.job-meta {
    display: flex;
    justify-content: space-between;
    align-items: center;
    gap: 8px;
    margin-top: 4px;
    font-size: 22px;
    line-height: 27.500px;
}

.job-meta span {
    min-width: 0;
    opacity: 0.9;
}

.job-btn {
    flex: none;
    display: flex;
    align-items: center;
    gap: 2px;
    height: 34px;
    padding: 0 8px 0 5px;
    font-size: 21px;
    color: white;
    background-color: rgba(255, 255, 255, 0.2);
    border-radius: 10px;
}

.job-btn .ic {
    width: 26px;
    height: 26px;
    stroke-width: 1.6;
}

/* Future days */
.slot {
    display: flex;
    flex-direction: column;
    justify-content: space-between;
    min-height: 264px;
    padding: 12px 14px 16px;
    font-size: 26px;
    color: #737373;
    border: 2px dashed #aaaaaa;
    border-radius: 18px;
}

.slot b {
    display: block;
    font-size: 28px;
    font-weight: 500;
    line-height: 26px;
    color: #404040;
}

.slot small {
    display: block;
    font-size: 22px;
    line-height: 26px;
    letter-spacing: 0.6px;
}

/* Notice */
.notice {
    display: flex;
    align-items: center;
    gap: 14px;
    height: 92px;
    padding: 0 30px;
    font-size: 29.500px;
    color: #c10007;
    background-color: #fdebee;
    border: 2px solid #f2b0b8;
    border-radius: 20px;
}

.notice .ic {
    width: 36px;
    height: 36px;
    stroke-width: 1.7;
}

/* Queue */
.queue {
    border: 2px solid #e5e5e5;
    border-radius: 26px;
    overflow: hidden;
}

.queue-head {
    display: flex;
    justify-content: space-between;
    align-items: center;
    height: 83px;
    padding: 0 32px;
    background-color: #f5f5f5;
    border-bottom: 2px solid #e5e5e5;
}

.queue-head h3 {
    font-size: 29px;
    font-weight: 700;
    letter-spacing: 1px;
    color: #0f172a;
}

.queue-head p {
    font-size: 25px;
    color: #525252;
}

.queue-row {
    display: flex;
    align-items: center;
    height: 82px;
    padding: 0 32px;
    border-bottom: 2px solid #e5e5e5;
}

.queue-row:last-child {
    height: 80px;
    border-bottom: none;
}

.queue-num {
    flex: none;
    width: 36px;
    height: 36px;
    font-size: 24px;
    line-height: 32px;
    text-align: center;
    color: #737373;
    border: 2px dashed #aaaaaa;
    border-radius: 50%;
}

.queue-name {
    flex: 1;
    margin-left: 24px;
    font-size: 29px;
    letter-spacing: 0.2px;
    color: #1e293b;
}

.queue-tag {
    height: 38px;
    padding: 0 12px;
    font-size: 22px;
    line-height: 38px;
    color: #525252;
    background-color: #f5f5f5;
    border-radius: 10px;
}
```
